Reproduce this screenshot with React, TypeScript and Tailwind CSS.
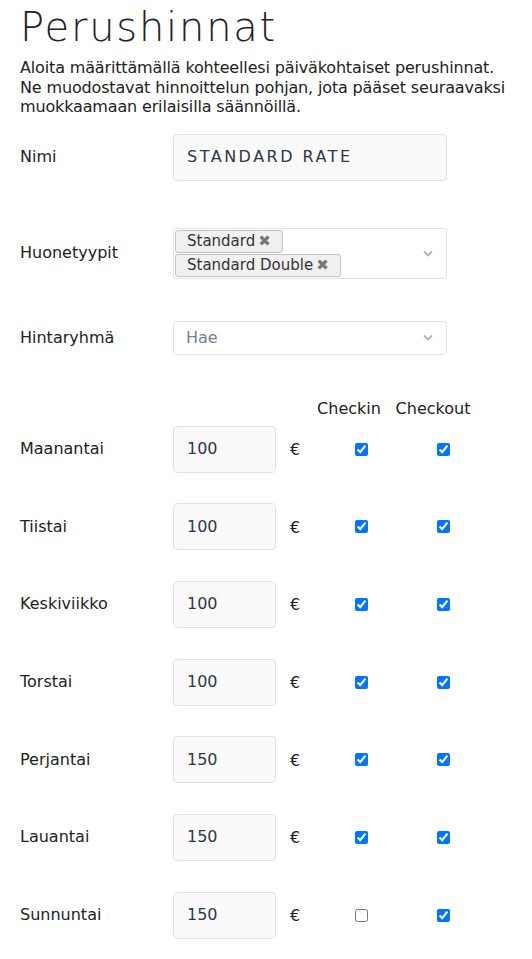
import React from "react";

const days = [
  { name: "Maanantai", price: "100", checkin: true, checkout: true },
  { name: "Tiistai", price: "100", checkin: true, checkout: true },
  { name: "Keskiviikko", price: "100", checkin: true, checkout: true },
  { name: "Torstai", price: "100", checkin: true, checkout: true },
  { name: "Perjantai", price: "150", checkin: true, checkout: true },
  { name: "Lauantai", price: "150", checkin: true, checkout: true },
  { name: "Sunnuntai", price: "150", checkin: false, checkout: true },
];

function Chevron() {
  return (
    <svg width="10" height="7" viewBox="0 0 10 7" className="text-[#b3b3b3]">
      <path d="M1 1.5 L5 5.5 L9 1.5" fill="none" stroke="currentColor" strokeWidth="1.8" />
    </svg>
  );
}

function Tag({ label }: { label: string }) {
  return (
    <span className="inline-flex items-center gap-[3px] h-[23px] px-[11px] bg-[#f0f0f0] border border-[#c4c4c4] rounded-[3px] text-[15px] text-[#333]">
      {label}
      <span className="text-[#777] text-[15px] font-bold leading-none">✖</span>
    </span>
  );
}

export default function App() {
  return (
    <div className="w-[532px] bg-white text-[#222] font-['DejaVu_Sans',sans-serif] px-5">
      <h1 className="text-[40px] font-light leading-none pt-[7px] tracking-[1.8px]">Perushinnat</h1>
      <p className="mt-[11px] text-[16px] leading-[19.5px] tracking-[-0.15px] whitespace-nowrap">
        Aloita määrittämällä kohteellesi päiväkohtaiset perushinnat.
        <br />
        Ne muodostavat hinnoittelun pohjan, jota pääset seuraavaksi
        <br />
        muokkaamaan erilaisilla säännöillä.
      </p>

      {/* Nimi */}
      <div className="grid grid-cols-[153px_274px] items-center mt-[17px] text-[16px]">
        <label>Nimi</label>
        <div className="h-[47px] flex items-center px-[13px] bg-[#fafafa] border border-[#e2e2e2] rounded-[4px] text-[#2d3748] tracking-[2.5px]">
          STANDARD RATE
        </div>
      </div>

      {/* Huonetyypit */}
      <div className="grid grid-cols-[153px_274px] items-center mt-[47px] text-[16px]">
        <label>Huonetyypit</label>
        <div className="h-[51px] flex items-center justify-between pl-[1px] pr-[13px] bg-white border border-[#e2e2e2] rounded-[3px]">
          <div className="flex flex-col items-start gap-[1px]">
            <Tag label="Standard" />
            <Tag label="Standard Double" />
          </div>
          <Chevron />
        </div>
      </div>

      {/* Hintaryhmä */}
      <div className="grid grid-cols-[153px_274px] items-center mt-[42px] text-[16px]">
        <label>Hintaryhmä</label>
        <div className="h-[34px] flex items-center justify-between pl-[12px] pr-[13px] bg-white border border-[#e2e2e2] rounded-[4px] text-[#718096]">
          Hae
          <Chevron />
        </div>
      </div>

      {/* Header */}
      <div className="grid grid-cols-[289px_80px_88px] items-center mt-[42px] text-[16px]">
        <span />
        <span className="text-center">Checkin</span>
        <span className="text-center">Checkout</span>
      </div>

      <div className="flex flex-col gap-[30.7px] mt-[5px]">
        {days.map((d) => (
          <div key={d.name} className="grid grid-cols-[153px_103px_54px_62px_102px] items-center text-[16px]">
            <label>{d.name}</label>
            <div className="h-[47px] flex items-center px-[13px] bg-[#fafafa] border border-[#e2e2e2] rounded-[4px] text-[#2d3748]">
              {d.price}
            </div>
            <span className="pl-[14px] pt-[2px]">€</span>
            <span className="flex justify-center">
              <input type="checkbox" defaultChecked={d.checkin} className="w-[13px] h-[13px]" />
            </span>
            <span className="flex justify-center">
              <input type="checkbox" defaultChecked={d.checkout} className="w-[13px] h-[13px]" />
            </span>
          </div>
        ))}
      </div>
      <div className="h-[20px]" />
    </div>
  );
}
